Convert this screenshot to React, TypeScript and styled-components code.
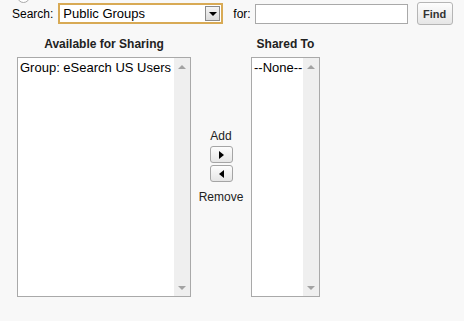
import React from "react";
import styled, { createGlobalStyle } from "styled-components";

const GlobalStyle = createGlobalStyle`
  html, body {
    margin: 0;
    padding: 0;
    background: #f8f8f8;
    font-family: "Liberation Sans", Arial, sans-serif;
    color: #000;
  }
`;

const App: React.FC = () => {
  return (
    <>
      <GlobalStyle />
      <Page>
        <RadioStub />
        <SearchRow>
          <Label>Search:</Label>
          <FakeSelect>
            <SelectText>Public Groups</SelectText>
            <SelectButton>
              <DownTriangle />
            </SelectButton>
          </FakeSelect>
          <ForLabel>for:</ForLabel>
          <TextInput />
          <FindButton type="button">Find</FindButton>
        </SearchRow>

        <Columns>
          <Column>
            <Heading>Available for Sharing</Heading>
            <ListBox $width={174}>
              <ListItems>
                <Item>Group: eSearch US Users</Item>
              </ListItems>
              <Scrollbar>
                <ScrollArrow $dir="up" />
                <ScrollArrow $dir="down" />
              </Scrollbar>
            </ListBox>
          </Column>

          <Middle>
            <MidLabel>Add</MidLabel>
            <ArrowButton type="button">
              <RightTri />
            </ArrowButton>
            <ArrowButton type="button">
              <LeftTri />
            </ArrowButton>
            <MidLabel $gapTop={6}>Remove</MidLabel>
          </Middle>

          <Column>
            <Heading>Shared To</Heading>
            <ListBox $width={69}>
              <ListItems>
                <Item>--None--</Item>
              </ListItems>
              <Scrollbar>
                <ScrollArrow $dir="up" />
                <ScrollArrow $dir="down" />
              </Scrollbar>
            </ListBox>
          </Column>
        </Columns>
      </Page>
    </>
  );
};

export default App;

/* ------------------- styled-components ------------------- */

const Page = styled.div`
  width: 464px;
  height: 321px;
  overflow: hidden;
  box-sizing: border-box;
`;

const RadioStub = styled.div`
  width: 11px;
  height: 11px;
  margin: -10px 0 -1px 17px;
  border: 1px solid #a8a8a8;
  border-radius: 50%;
  background: #fff;
`;

const SearchRow = styled.div`
  display: flex;
  align-items: center;
  padding: 0 0 0 12px;
  height: 23px;
`;

const Label = styled.span`
  font-size: 12px;
  margin-right: 5px;
`;

const FakeSelect = styled.div`
  width: 165px;
  height: 21px;
  box-sizing: border-box;
  border: 2px solid #d8aa55;
  background: #fff;
  display: flex;
  align-items: center;
  justify-content: space-between;
  padding: 0 1px 0 3px;
`;

const SelectText = styled.span`
  font-size: 13px;
`;

const SelectButton = styled.div`
  width: 15px;
  height: 15px;
  box-sizing: border-box;
  border: 1px solid #8a8a8a;
  background: linear-gradient(#f4f4f4, #dcdcdc);
  display: flex;
  align-items: center;
  justify-content: center;
`;

const DownTriangle = styled.div`
  width: 0;
  height: 0;
  border-left: 4px solid transparent;
  border-right: 4px solid transparent;
  border-top: 4px solid #000;
`;

const ForLabel = styled.span`
  font-size: 12px;
  margin-left: 10px;
  margin-right: 4px;
`;

const TextInput = styled.div`
  width: 153px;
  height: 20px;
  box-sizing: border-box;
  border: 1px solid #a9a9a9;
  background: #fff;
`;

const FindButton = styled.button`
  margin-left: 9px;
  width: 36px;
  height: 23px;
  box-sizing: border-box;
  border: 1px solid #b5b5b5;
  border-radius: 3px;
  background: linear-gradient(#fdfdfd, #e6e6e6);
  font-family: "Liberation Sans", Arial, sans-serif;
  font-weight: 700;
  font-size: 11px;
  color: #333;
  padding: 0;
`;

const Columns = styled.div`
  display: flex;
  align-items: flex-start;
  padding: 12px 0 0 17px;
`;

const Column = styled.div`
  display: flex;
  flex-direction: column;
  align-items: center;
`;

const Heading = styled.div`
  font-size: 12px;
  font-weight: 700;
  height: 14px;
  line-height: 14px;
  margin-bottom: 6px;
  color: #222;
`;

const ListBox = styled.div<{ $width: number }>`
  width: ${({ $width }) => $width}px;
  height: 240px;
  box-sizing: border-box;
  border: 1px solid #a9a9a9;
  background: #fff;
  display: flex;
`;

const ListItems = styled.div`
  flex: 1;
  padding: 2px 0 0 2px;
  overflow: hidden;
`;

const Item = styled.div`
  font-size: 13px;
  line-height: 15px;
  white-space: nowrap;
`;

const Scrollbar = styled.div`
  width: 16px;
  background: #efefef;
  display: flex;
  flex-direction: column;
  justify-content: space-between;
  align-items: center;
  padding: 7px 0 6px;
  box-sizing: border-box;
`;

const ScrollArrow = styled.div<{ $dir: "up" | "down" }>`
  width: 0;
  height: 0;
  border-left: 4px solid transparent;
  border-right: 4px solid transparent;
  ${({ $dir }) =>
    $dir === "up"
      ? "border-bottom: 4px solid #a3a3a3;"
      : "border-top: 4px solid #a3a3a3;"}
`;

const Middle = styled.div`
  width: 60px;
  display: flex;
  flex-direction: column;
  align-items: center;
  padding-top: 91px;
  gap: 2px;
`;

const MidLabel = styled.div<{ $gapTop?: number }>`
  font-size: 12px;
  line-height: 14px;
  color: #222;
  margin: ${({ $gapTop }) => $gapTop ?? 1}px 0 1px;
`;

const ArrowButton = styled.button`
  width: 23px;
  height: 17px;
  box-sizing: border-box;
  border: 1px solid #a5a5a5;
  border-radius: 3px;
  background: linear-gradient(#fdfdfd, #e6e6e6);
  padding: 0;
  display: flex;
  align-items: center;
  justify-content: center;
`;

const RightTri = styled.div`
  width: 0;
  height: 0;
  border-top: 4px solid transparent;
  border-bottom: 4px solid transparent;
  border-left: 5px solid #000;
`;

const LeftTri = styled.div`
  width: 0;
  height: 0;
  border-top: 4px solid transparent;
  border-bottom: 4px solid transparent;
  border-right: 5px solid #000;
`;
